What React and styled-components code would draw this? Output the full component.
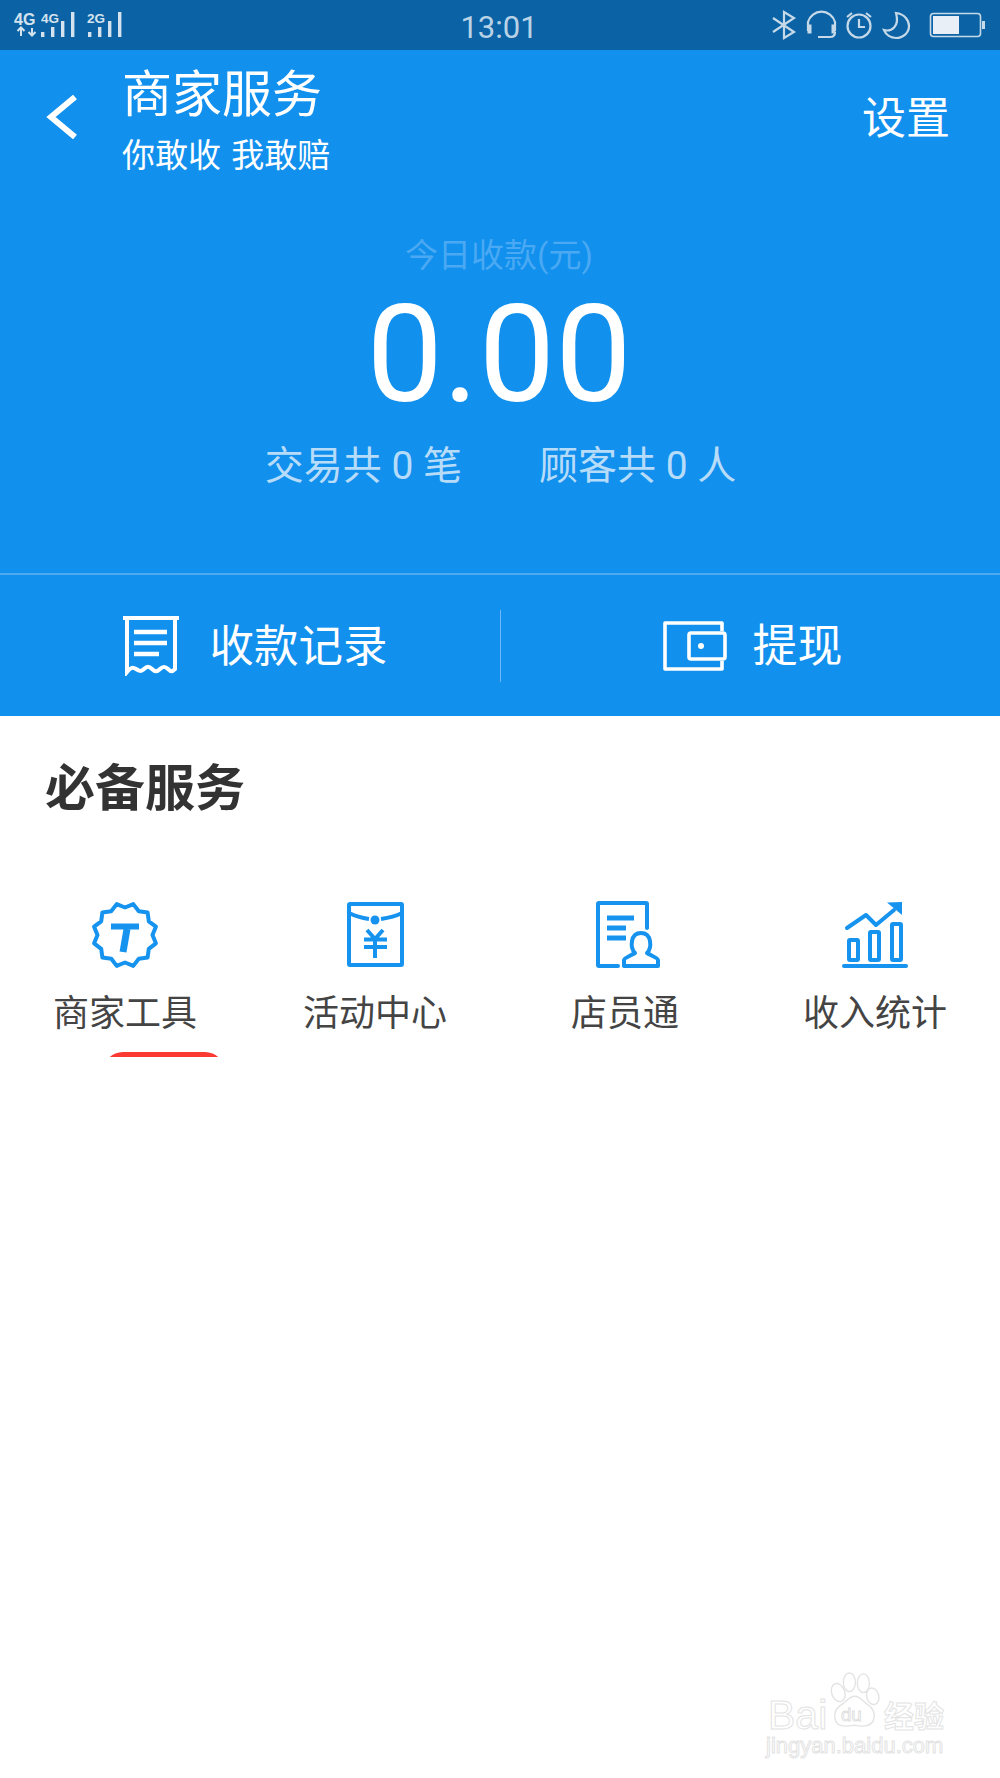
import React from "react";
import styled, { createGlobalStyle } from "styled-components";

const cjk = `Roboto, "Noto Sans CJK SC", sans-serif`;
const BLUE = "#1190ee";
const ICON = "#1593ef";

const Global = createGlobalStyle`
  html, body { margin: 0; padding: 0; background: #fff; }
  * { box-sizing: border-box; }
`;
const Page = styled.div`
  position: relative; width: 1000px; height: 1778px; overflow: hidden; background: #fff; font-family: ${cjk};
`;
const StatusBar = styled.div`
  height: 50px; background: #0b63a5; display: grid; grid-template-columns: 1fr auto 1fr; align-items: center; color: #c5d9e9;
`;
const Left = styled.div`display: flex; padding-left: 14px;`;
const Right = styled.div`display: flex; justify-content: flex-end;`;
const Time = styled.div`font: 400 31px Roboto, sans-serif; color: #b9d2e6; padding-top: 4px; margin-right: 2px;`;
const SigLabel = styled.text`font: 700 ${p => p.$s}px "Liberation Sans", sans-serif; fill: #d5e3ef;`;

const Hero = styled.section`background: ${BLUE}; height: 666px; display: flex; flex-direction: column; color: #fff;`;
const Nav = styled.header`display: flex; align-items: flex-start; padding: 15px 50px 0 45px; height: 183px;`;
const Back = styled.div`width: 77px; padding-top: 30px; line-height: 0;`;
const TitleBox = styled.div`flex: 1;`;
const Title = styled.h1`margin: 0; font-weight: 400; font-size: 50px; line-height: 60px; letter-spacing: 0;`;
const Sub = styled.div`font-size: 33px; line-height: 44px; margin-top: 9px; word-spacing: 2px;`;
const Settings = styled.div`font-size: 44px; line-height: 60px; margin-top: 24px;`;

const Summary = styled.div`height: 340px; display: flex; flex-direction: column; align-items: center;`;
const Caption = styled.div`font-size: 33px; line-height: 46px; color: #4aa9f2; margin-left: -2px;`;
const Amount = styled.div`font-size: 136px; line-height: 140px; margin-top: 6px; margin-left: -2px;`;
const Stats = styled.div`display: flex; gap: 77px; font-size: 39px; line-height: 50px; color: #b7dcf9; margin-top: 16px; margin-left: 1px;`;

const Actions = styled.div`
  flex: 1; display: grid; grid-template-columns: 501px 1fr; border-top: 2px solid #4fa9f1; align-items: center;
`;
const Action = styled.div`
  display: flex; align-items: center; justify-content: center; gap: ${p => p.$gap}px; height: 72px; font-size: ${p => p.$size}px; padding-left: ${p => p.$pad}px;
  ${p => p.$divider && "border-right: 1px solid #70b8f3;"}
`;
const ActionText = styled.span`padding-bottom: 6px;`;

const Services = styled.section`padding: 0;`;
const SectionTitle = styled.h2`
  margin: 0; font-size: 50px; font-weight: 700; color: #333; line-height: 60px; padding: 43px 0 0 45px;
`;
const Grid = styled.div`
  position: relative; display: grid; grid-template-columns: repeat(4, 250px); margin-top: 82px; height: 156px; overflow: hidden;
`;
const Item = styled.div`display: flex; flex-direction: column; align-items: center; position: relative;`;
const IconSlot = styled.div`height: 68px; line-height: 0;`;
const Label = styled.div`font-size: 36px; line-height: 48px; color: #444; margin-top: 21px;`;
const Badge = styled.div`
  position: absolute; left: 103px; top: 151px; width: 122px; height: 40px; border-radius: 20px; background: #fb3b32;
`;

const Watermark = styled.div`position: absolute; left: 766px; top: 1672px; width: 190px; height: 92px;`;
const Outline = styled.div`
  color: #fff; -webkit-text-stroke: 1px #e3e3e3; font-family: "Liberation Sans", sans-serif; line-height: 1;
`;
const MarkRow = styled.div`display: flex; align-items: flex-end; height: 56px;`;
const BaiText = styled(Outline)`font-size: 41px; line-height: .8; width: 60px; margin: 0 0 -4px 2px;`;
const JyText = styled(Outline)`font-family: "Noto Sans CJK SC", sans-serif; font-size: 30px; font-weight: 700; margin: 0 0 -1px 2px;`;
const Domain = styled(Outline)`font-size: 22px; margin-top: 7px; white-space: nowrap;`;

const Signal = ({ w, label, s, x0 }) => (
  <svg width={w} height="50" viewBox={`0 0 ${w} 50`}>
    <SigLabel x="0" y="23" $s={s}>{label}</SigLabel>
    {[[0, 32], [10, 27], [20, 21], [30, 12]].map(([x, y]) => (
      <rect key={x} x={x0 + x} y={y} width="3.4" height={37 - y} fill="#d5e3ef" />
    ))}
  </svg>
);

const StatusLeft = () => (
  <Left>
    <svg width="27" height="50" viewBox="0 0 27 50">
      <SigLabel x="0" y="25" $s={16}>4G</SigLabel>
      <path d="M7 36v-7M3.500 31l3.500-3.500 3.500 3.500M18 28v7M14.500 32l3.500 3.500 3.500-3.500" stroke="#d5e3ef" strokeWidth="2" fill="none" />
    </svg>
    <Signal w={46} label="4G" s={13.5} x0={0} />
    <Signal w={40} label="2G" s={13.5} x0={1} />
  </Left>
);

const StatusRight = () => (
  <Right>
    <svg width="250" height="50" viewBox="750 0 250 50" fill="none" stroke="#c5d9e9" strokeWidth="2.2">
      <path d="M773 18l21 14-10 6V12l10 6-21 14" />
      <path d="M808 31v-9a14 14 0 0 1 27 0v9" />
      <rect x="808" y="25" width="3" height="8" fill="#c5d9e9" strokeWidth="1" />
      <rect x="832" y="25" width="3" height="8" fill="#c5d9e9" strokeWidth="1" />
      <path d="M835 32c0 3-2 5-5 5h-12" />
      <circle cx="859" cy="26" r="11.5" />
      <path d="M859 19v8h6M847 17l5-4M871 17l-5-4" />
      <path d="M896 13c9 1 13 8 13 13 0 7-6 12-13 12-5 0-10-3-12-8 7 2 16-3 12-17z" />
      <rect x="930.5" y="13.5" width="50" height="23" rx="3" strokeWidth="1.6" />
      <rect x="933" y="16" width="26" height="18" fill="#e9eff6" stroke="none" />
      <rect x="982" y="21" width="3" height="8" fill="#c5d9e9" stroke="none" />
    </svg>
  </Right>
);

const Chevron = () => (
  <svg width="32" height="44" viewBox="0 0 32 44" fill="none" stroke="#fff" strokeWidth="6">
    <path d="M30 2L6 22 30 42" />
  </svg>
);

const Receipt = () => (
  <svg width="56" height="60" viewBox="0 0 56 60" fill="none" stroke="#fff" strokeWidth="4">
    <path d="M0 2h56M4 2v54c4-5 6-5 9-3s5 3 8 0 5-3 8 0 5 3 8 0 5-3 8 0 4 3 7 0V2" />
    <path d="M11 16h33M11 27h33M11 38h25" strokeWidth="4.5" />
  </svg>
);

const Wallet = () => (
  <svg width="64" height="50" viewBox="0 0 64 50" fill="none" stroke="#fff" strokeWidth="3.6" strokeLinejoin="round">
    <path d="M59 10V2H2v46h57v-8" />
    <rect x="26" y="12" width="36" height="26" rx="2" />
    <circle cx="38" cy="25" r="3" fill="#fff" stroke="none" />
  </svg>
);

const scallop = (() => {
  const n = 12, pts = [];
  for (let i = 0; i < n; i++) {
    const a = (i / n) * 2 * Math.PI - Math.PI / 2 + Math.PI / 12;
    const b = ((i + 0.5) / n) * 2 * Math.PI - Math.PI / 2 + Math.PI / 12;
    pts.push([34 + 32 * Math.cos(a), 34 + 32 * Math.sin(a), 34 + 27.5 * Math.cos(b), 34 + 27.5 * Math.sin(b)]);
  }
  let d = "";
  pts.forEach((p, i) => {
    d += (i ? "L" : "M") + p[0].toFixed(1) + " " + p[1].toFixed(1) + "L" + p[2].toFixed(1) + " " + p[3].toFixed(1);
  });
  return d + "Z";
})();

const ToolIcon = () => (
  <svg width="68" height="68" viewBox="0 0 68 68" fill="none" stroke={ICON} strokeWidth="4" strokeLinejoin="round">
    <path d={scallop} />
    <path d="M20 25.500h28" strokeWidth="6" />
    <path d="M36 28l-4 23" strokeWidth="7" />
  </svg>
);

const EnvelopeIcon = () => (
  <svg width="60" height="68" viewBox="0 0 60 68" fill="none" stroke={ICON} strokeWidth="4" strokeLinejoin="round">
    <rect x="4" y="3" width="53" height="61" rx="1" />
    <path d="M4 12c6 3 13 5 20 6M36 18c7-1 15-3 21-6" />
    <circle cx="30" cy="19" r="4.500" fill={ICON} stroke="none" />
    <path d="M22 29l8 9 8-9M19 38.500h23M19 46h23M30 38v19" />
  </svg>
);

const StaffIcon = () => (
  <svg width="72" height="68" viewBox="0 0 72 68" fill="none" stroke={ICON} strokeWidth="4" strokeLinejoin="round" strokeLinecap="round">
    <path d="M29 65H10a1 1 0 0 1-1-1V3a1 1 0 0 1 1-1h47a1 1 0 0 1 1 1v24" />
    <path d="M18 17h27M18 27h19M18 37h19" strokeWidth="5" strokeLinecap="butt" />
    <path d="M35 65v-6c0-2 8-5 11-7-5-5-5-20 6-20s11 15 6 20c3 2 11 5 11 7v6z" />
  </svg>
);

const ChartIcon = () => (
  <svg width="68" height="68" viewBox="0 0 68 68" fill="none" stroke={ICON} strokeWidth="4" strokeLinecap="round" strokeLinejoin="round">
    <path d="M6 27l19-13 10 10 18-15" />
    <path d="M61 1v13L46 1.500z" fill={ICON} stroke="none" />
    <rect x="8" y="39" width="9" height="20" rx="1" />
    <rect x="29" y="31" width="9" height="28" rx="1" />
    <rect x="51" y="23" width="9" height="36" rx="1" />
    <path d="M3 65h62" />
  </svg>
);

const items = [
  { label: "商家工具", Icon: ToolIcon },
  { label: "活动中心", Icon: EnvelopeIcon },
  { label: "店员通", Icon: StaffIcon },
  { label: "收入统计", Icon: ChartIcon },
];

const Paw = () => (
  <svg width="54" height="56" viewBox="0 0 54 60" fill="#fff" stroke="#e3e3e3" strokeWidth="1.5">
    <ellipse cx="9" cy="22" rx="7" ry="10" transform="rotate(-20 9 22)" />
    <ellipse cx="21" cy="11" rx="6.5" ry="10" />
    <ellipse cx="36" cy="12" rx="6.5" ry="10" />
    <ellipse cx="46" cy="26" rx="6.5" ry="9" transform="rotate(-15 46 26)" />
    <path d="M27 26c6 0 10 7 15 10 8 5 9 22-7 22-4 0-6-1-9-1s-5 1-9 1C2 58 3 42 11 36c6-3 9-10 16-10z" />
    <text x="12" y="52" style={{ font: '400 20px "Liberation Sans", sans-serif' }} fill="#fff" stroke="#dedede" strokeWidth="1">du</text>
  </svg>
);

export default function App() {
  return (
    <Page>
      <Global />
      <StatusBar>
        <StatusLeft />
        <Time>13:01</Time>
        <StatusRight />
      </StatusBar>
      <Hero>
        <Nav>
          <Back><Chevron /></Back>
          <TitleBox>
            <Title>商家服务</Title>
            <Sub>你敢收 我敢赔</Sub>
          </TitleBox>
          <Settings>设置</Settings>
        </Nav>
        <Summary>
          <Caption>今日收款(元)</Caption>
          <Amount>0.00</Amount>
          <Stats>
            <span>交易共 0 笔</span>
            <span>顾客共 0 人</span>
          </Stats>
        </Summary>
        <Actions>
          <Action $divider $gap={30} $pad={11} $size={44.5}><Receipt /><ActionText>收款记录</ActionText></Action>
          <Action $gap={25} $pad={5} $size={45}><Wallet /><ActionText>提现</ActionText></Action>
        </Actions>
      </Hero>
      <Services>
        <SectionTitle>必备服务</SectionTitle>
        <Grid>
          {items.map(({ label, Icon }) => (
            <Item key={label}>
              <IconSlot><Icon /></IconSlot>
              <Label>{label}</Label>
            </Item>
          ))}
          <Badge />
        </Grid>
      </Services>
      <Watermark>
        <MarkRow>
          <BaiText>Bai</BaiText>
          <Paw />
          <JyText>经验</JyText>
        </MarkRow>
        <Domain>jingyan.baidu.com</Domain>
      </Watermark>
    </Page>
  );
}
